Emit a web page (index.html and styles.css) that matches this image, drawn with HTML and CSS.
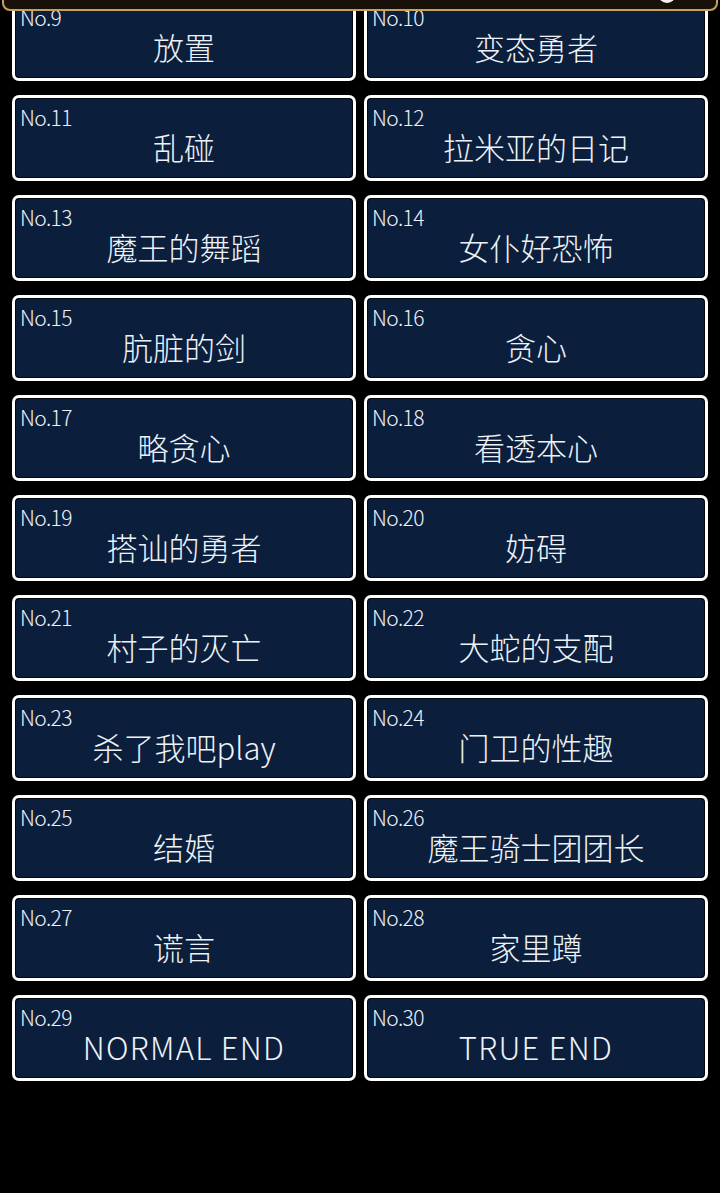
FILE: index.html
```html
<!DOCTYPE html>
<html lang="zh-CN">
<head>
<meta charset="utf-8">
<title>结局列表</title>
<link rel="stylesheet" href="styles.css">
</head>
<body>
<div class="topbar"><span class="topbar-btn"></span></div>
<main class="list">
  <div class="card"><div class="card-in"><span class="no">No.9</span><span class="title">放置</span></div></div>
  <div class="card"><div class="card-in"><span class="no">No.10</span><span class="title">变态勇者</span></div></div>
  <div class="card"><div class="card-in"><span class="no">No.11</span><span class="title">乱碰</span></div></div>
  <div class="card"><div class="card-in"><span class="no">No.12</span><span class="title">拉米亚的日记</span></div></div>
  <div class="card"><div class="card-in"><span class="no">No.13</span><span class="title">魔王的舞蹈</span></div></div>
  <div class="card"><div class="card-in"><span class="no">No.14</span><span class="title">女仆好恐怖</span></div></div>
  <div class="card"><div class="card-in"><span class="no">No.15</span><span class="title">肮脏的剑</span></div></div>
  <div class="card"><div class="card-in"><span class="no">No.16</span><span class="title">贪心</span></div></div>
  <div class="card"><div class="card-in"><span class="no">No.17</span><span class="title">略贪心</span></div></div>
  <div class="card"><div class="card-in"><span class="no">No.18</span><span class="title">看透本心</span></div></div>
  <div class="card"><div class="card-in"><span class="no">No.19</span><span class="title">搭讪的勇者</span></div></div>
  <div class="card"><div class="card-in"><span class="no">No.20</span><span class="title">妨碍</span></div></div>
  <div class="card"><div class="card-in"><span class="no">No.21</span><span class="title">村子的灭亡</span></div></div>
  <div class="card"><div class="card-in"><span class="no">No.22</span><span class="title">大蛇的支配</span></div></div>
  <div class="card"><div class="card-in"><span class="no">No.23</span><span class="title">杀了我吧play</span></div></div>
  <div class="card"><div class="card-in"><span class="no">No.24</span><span class="title">门卫的性趣</span></div></div>
  <div class="card"><div class="card-in"><span class="no">No.25</span><span class="title">结婚</span></div></div>
  <div class="card"><div class="card-in"><span class="no">No.26</span><span class="title">魔王骑士团团长</span></div></div>
  <div class="card"><div class="card-in"><span class="no">No.27</span><span class="title">谎言</span></div></div>
  <div class="card"><div class="card-in"><span class="no">No.28</span><span class="title">家里蹲</span></div></div>
  <div class="card"><div class="card-in"><span class="no">No.29</span><span class="title latin">NORMAL END</span></div></div>
  <div class="card"><div class="card-in"><span class="no">No.30</span><span class="title latin">TRUE END</span></div></div>
</main>
</body>
</html>
```
FILE: styles.css
```css
html, body {
  margin: 0;
  padding: 0;
  background: #000;
  height: 100%;
  overflow: hidden;
}
body {
  font-family: "Noto Sans CJK SC", "Noto Sans", sans-serif;
  color: #eef2f7;
}
.topbar {
  position: fixed;
  top: -40px;
  left: 2px;
  width: 712px;
  height: 47px;
  border: 2px solid #c9a058;
  border-radius: 8px;
  background: #17110a;
  z-index: 10;
}
.topbar-btn {
  position: absolute;
  right: 40px;
  bottom: 6px;
  width: 18px;
  height: 18px;
  border-radius: 50%;
  background: #f2f2f2;
}
.list {
  display: grid;
  grid-template-columns: 1fr 1fr;
  column-gap: 8px;
  row-gap: 14px;
  padding: 0 12px;
  margin-top: -5px;
}
.card {
  height: 86px;
  box-sizing: border-box;
  border: 3px solid #ffffff;
  border-radius: 7px;
  background: #03070e;
  padding: 1px;
}
.card-in {
  height: 100%;
  box-sizing: border-box;
  border-radius: 4px;
  background: #0b1f3c;
  display: flex;
  flex-direction: column;
  padding: 6px 4px 0 4px;
}
.no {
  font-size: 21px;
  font-weight: 300;
  line-height: 24px;
  letter-spacing: -0.6px;
}
.title {
  font-size: 31px;
  font-weight: 300;
  line-height: 34px;
  text-align: center;
  margin-top: 1px;
}
.title.latin {
  letter-spacing: 1.3px;
}
```
